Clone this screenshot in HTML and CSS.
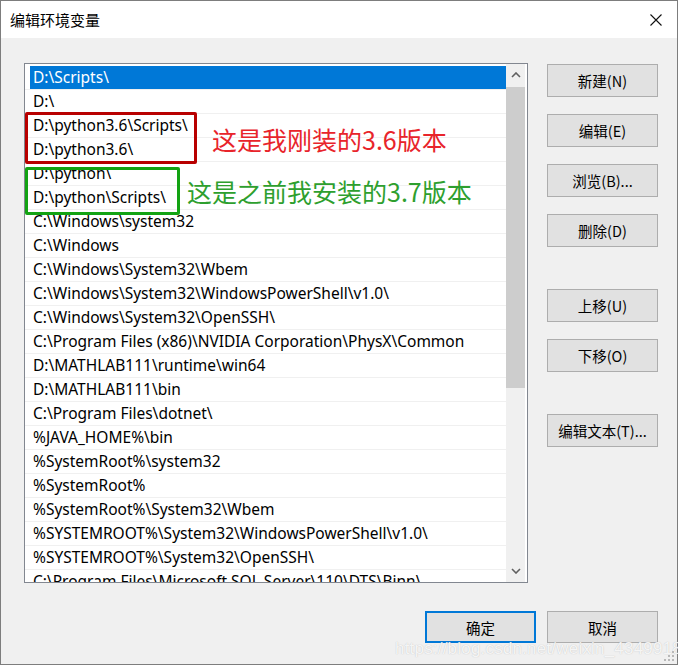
FILE: index.html
```html
<!DOCTYPE html>
<html lang="zh-CN">
<head>
<meta charset="utf-8">
<title>编辑环境变量</title>
<link rel="stylesheet" href="styles.css">
</head>
<body>
<div class="window">
  <div class="titlebar">
    <span class="title">编辑环境变量</span>
    <svg class="close" width="12" height="12" viewBox="0 0 12 12"><path d="M0.5 0.5 L11.5 11.5 M11.5 0.5 L0.5 11.5" stroke="#111" stroke-width="1.1" fill="none"/></svg>
  </div>
  <div class="body">
    <div class="main">
      <div class="listbox">
        <div class="rows">
          <div class="row sel"><span class="cell">D:\Scripts\</span></div>
          <div class="row"><span class="cell">D:\</span></div>
          <div class="row"><span class="cell">D:\python3.6\Scripts\</span></div>
          <div class="row"><span class="cell">D:\python3.6\</span></div>
          <div class="row"><span class="cell">D:\python\</span></div>
          <div class="row"><span class="cell">D:\python\Scripts\</span></div>
          <div class="row"><span class="cell">C:\Windows\system32</span></div>
          <div class="row"><span class="cell">C:\Windows</span></div>
          <div class="row"><span class="cell">C:\Windows\System32\Wbem</span></div>
          <div class="row"><span class="cell">C:\Windows\System32\WindowsPowerShell\v1.0\</span></div>
          <div class="row"><span class="cell">C:\Windows\System32\OpenSSH\</span></div>
          <div class="row"><span class="cell">C:\Program Files (x86)\NVIDIA Corporation\PhysX\Common</span></div>
          <div class="row"><span class="cell">D:\MATHLAB111\runtime\win64</span></div>
          <div class="row"><span class="cell">D:\MATHLAB111\bin</span></div>
          <div class="row"><span class="cell">C:\Program Files\dotnet\</span></div>
          <div class="row"><span class="cell">%JAVA_HOME%\bin</span></div>
          <div class="row"><span class="cell">%SystemRoot%\system32</span></div>
          <div class="row"><span class="cell">%SystemRoot%</span></div>
          <div class="row"><span class="cell">%SystemRoot%\System32\Wbem</span></div>
          <div class="row"><span class="cell">%SYSTEMROOT%\System32\WindowsPowerShell\v1.0\</span></div>
          <div class="row"><span class="cell">%SYSTEMROOT%\System32\OpenSSH\</span></div>
          <div class="row"><span class="cell">C:\Program Files\Microsoft SQL Server\110\DTS\Binn\</span></div>
        </div>
        <div class="scrollbar">
          <div class="sb-btn"><svg width="10" height="6" viewBox="0 0 10 6"><path d="M1 5 L5 1 L9 5" stroke="#606060" stroke-width="1.6" fill="none"/></svg></div>
          <div class="sb-track"><div class="sb-thumb"></div></div>
          <div class="sb-btn"><svg width="10" height="6" viewBox="0 0 10 6"><path d="M1 1 L5 5 L9 1" stroke="#606060" stroke-width="1.6" fill="none"/></svg></div>
        </div>
        <div class="mark mark-red"></div>
        <div class="mark mark-green"></div>
        <div class="note note-red">这是我刚装的3.6版本</div>
        <div class="note note-green">这是之前我安装的3.7版本</div>
      </div>
      <div class="side">
        <button class="btn">新建(N)</button>
        <button class="btn">编辑(E)</button>
        <button class="btn">浏览(B)...</button>
        <button class="btn">删除(D)</button>
        <button class="btn gap">上移(U)</button>
        <button class="btn">下移(O)</button>
        <button class="btn gap">编辑文本(T)...</button>
      </div>
    </div>
    <div class="footer">
      <button class="btn default">确定</button>
      <button class="btn">取消</button>
    </div>
  </div>
  <div class="watermark">https://blog.csdn.net/weixin_43499182</div>
  <svg class="grip" width="10" height="10" viewBox="0 0 10 10"><g fill="#b8b8b8"><rect x="8" y="0" width="2" height="2"/><rect x="4" y="4" width="2" height="2"/><rect x="8" y="4" width="2" height="2"/><rect x="0" y="8" width="2" height="2"/><rect x="4" y="8" width="2" height="2"/><rect x="8" y="8" width="2" height="2"/></g></svg>
</div>
</body>
</html>
```
FILE: styles.css
```css
html, body {
  margin: 0;
  padding: 0;
  background: #ffffff;
}
body {
  font-family: "Noto Sans", "Noto Sans CJK SC", sans-serif;
  color: #000;
}
.window {
  position: relative;
  width: 678px;
  height: 665px;
  box-sizing: border-box;
  border: 1px solid #7d7d7d;
  background: #f0f0f0;
  display: flex;
  flex-direction: column;
}
.titlebar {
  height: 37px;
  background: #ffffff;
  display: flex;
  align-items: center;
  justify-content: space-between;
  padding: 0 15px 0 9px;
  flex: none;
}
.title {
  font-family: "Noto Sans CJK SC", sans-serif;
  font-size: 15px;
  color: #000;
}
.close {
  display: block;
}
.body {
  flex: 1;
  padding: 25px 19px 0 23px;
  display: flex;
  flex-direction: column;
}
.main {
  display: flex;
  gap: 19px;
}
.listbox {
  position: relative;
  width: 504px;
  height: 520px;
  box-sizing: border-box;
  border: 1px solid #828790;
  background: #ffffff;
  display: flex;
}
.rows {
  flex: 1;
  overflow: hidden;
  padding-top: 2px;
}
.row {
  height: 24px;
  box-sizing: border-box;
  border-bottom: 1px solid #f0f0f0;
  padding-left: 5px;
  display: flex;
}
.cell {
  flex: 1;
  padding-left: 3px;
  font-family: "Noto Sans", "Noto Sans CJK SC", sans-serif;
  font-size: 15.5px;
  line-height: 23px;
  white-space: nowrap;
  color: #000;
}
.row.sel .cell {
  background: #0078d7;
  color: #ffffff;
}
.scrollbar {
  width: 19px;
  margin-right: 2px;
  background: #f0f0f0;
  display: flex;
  flex-direction: column;
}
.sb-btn {
  height: 22px;
  display: flex;
  align-items: center;
  justify-content: center;
  flex: none;
}
.sb-track {
  flex: 1;
  padding-top: 1px;
}
.sb-thumb {
  height: 301px;
  background: #cdcdcd;
}
.mark {
  position: absolute;
  box-sizing: border-box;
  border: 3px solid #c00000;
  border-radius: 2px;
}
.mark-red {
  left: 0;
  top: 48px;
  width: 172px;
  height: 52px;
  border-color: #b80000;
}
.mark-green {
  left: 0;
  top: 103px;
  width: 155px;
  height: 48px;
  border-color: #13a313;
}
.note {
  position: absolute;
  font-family: "Noto Sans CJK SC", sans-serif;
  font-size: 25px;
  line-height: 30px;
  white-space: nowrap;
}
.note-red {
  left: 187px;
  top: 60px;
  color: #e8242b;
}
.note-green {
  left: 162px;
  top: 112px;
  color: #2e9f2e;
}
.side {
  width: 111px;
  padding-top: 1px;
  display: flex;
  flex-direction: column;
  gap: 17px;
}
.btn {
  width: 111px;
  height: 33px;
  box-sizing: border-box;
  border: 1px solid #adadad;
  background: #e1e1e1;
  font-family: "Noto Sans CJK SC", sans-serif;
  font-size: 14.5px;
  color: #000;
  padding: 0;
  margin: 0;
}
.btn.gap {
  margin-top: 25px;
}
.footer {
  display: flex;
  justify-content: flex-end;
  gap: 11px;
  margin-top: 28px;
}
.footer .btn {
  height: 32px;
}
.btn.default {
  border: 2px solid #0078d7;
}
.watermark {
  position: absolute;
  left: 394px;
  top: 638px;
  font-family: "Liberation Sans", sans-serif;
  font-size: 17px;
  letter-spacing: 0.2px;
  color: rgba(255, 255, 255, 0.85);
  text-shadow: 0 0 1px rgba(150, 150, 150, 0.6);
  white-space: nowrap;
}
.grip {
  position: absolute;
  right: 3px;
  bottom: 3px;
}
```
